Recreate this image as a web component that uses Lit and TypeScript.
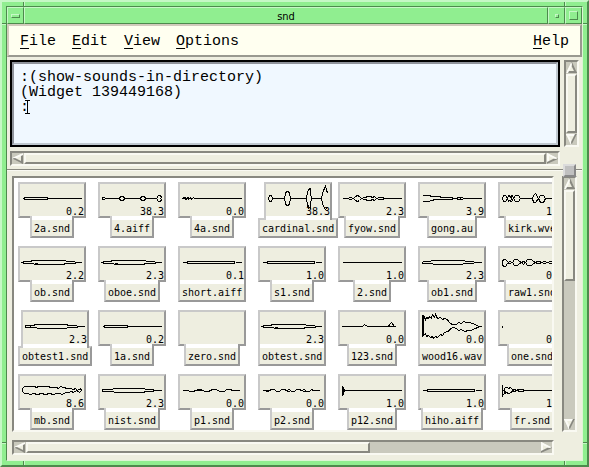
import { LitElement, html, svg, css } from "lit";
import { customElement, property } from "lit/decorators.js";
import { classMap } from "lit/directives/class-map.js";
import { styleMap } from "lit/directives/style-map.js";

interface Sound {
  name: string;
  length: string;
  wave: string;
}

/* Waveforms are drawn around y = 0, from x = 0 to x = 59. */
const OBOE =
  "M8-1H2L0 0L2 1H11L12 2H41L43 1H53M8-1L10-2H43L44-1H52L53 0M52 0H59M12 1H15";
const SHORT_BURST = "M0 0H2M2-1H25V1H2ZM25 0H59";
const TONE = "M0 0H5M5-1H52V1H5ZM53 0H59";

const SOUNDS: Sound[] = [
  { name: "2a.snd", length: "0.2", wave: SHORT_BURST },
  {
    name: "4.aiff",
    length: "38.3",
    wave: "M0-1H2L3 0L2 1H0ZM3 0H17L18-2H21L22 0L21 2H18L17 0M22 0H38L39-2H42L43 0L42 2H39L38 0M43 0H54L56-3H58L59-1L58 0L59 1L58 3H56L54 0",
  },
  {
    name: "4a.snd",
    length: "0.0",
    wave: "M0 0L2-1L3 1L5-1L6 1L8-1L9 1L11-1L12 0H59M1 0L3-1L4 1L6-1L8 1",
  },
  {
    name: "cardinal.snd",
    length: "38.3",
    wave: "M0 0L1-3H3L4 0L3 3H1ZM4 0H16L17-5L18-7H20L21-5L22 0L21 5L20 7H18L17 5L16 0M22 0H38L39-6L40-9L42-10V-5L43 0L42 6V10L40 8L39 6L38 0M39 8L41 11M43 0H53L54-5L55-8L57-12L58-9L59-5M53 0L54 5L55 8L57 11L59 9",
  },
  {
    name: "fyow.snd",
    length: "2.3",
    wave: "M0 0H5L8-1L11 0L13-2L15-3L17-2L19 0L17 2L15 3L13 2L11 0L8 1L5 0M19 0L22-1L26-2H28L30-1L32-2L34 0L32 2L30 1L28 2H26L22 1L19 0M34 0L37-1H40L42 0L40 1H37L34 0M42 0H59",
  },
  {
    name: "gong.au",
    length: "3.9",
    wave: "M0-3H7L9-2H16L20-1H28L33 0M0 3H7L8 2H10L12 1H20L26 1L34 0L36-1H40L41 0L40 1H36L34 0M37-1L39 1M41 0H59",
  },
  {
    name: "kirk.wve",
    length: "1.7",
    wave: "M0 0L1-3H3L5 0L3 3H1ZM5 0L6-3L8-2L10-3L11 0L9 3L7 2L6 3ZM8-2L10 2M11 0L13-3H16L18 0L16 3H13ZM18 0H30L31-3L33-5L36 0L38-3H41L43 0L41 4H38L36 0L33 4H31L30 0M43 0H59",
  },
  { name: "ob.snd", length: "2.2", wave: OBOE },
  { name: "oboe.snd", length: "2.3", wave: OBOE },
  { name: "short.aiff", length: "0.1", wave: TONE },
  { name: "s1.snd", length: "1.0", wave: TONE },
  { name: "2.snd", length: "1.0", wave: "M0 0H59" },
  {
    name: "ob1.snd",
    length: "2.3",
    wave: "M0-1H8L9-2H42L43-1H51L52 0H59M0-1V1H10L11 2H40L41 1H51L52 0",
  },
  {
    name: "raw1.snd",
    length: "0.8",
    wave: "M5-1L3-3H1L0-1V2L1 4H3L5 1M5-1L7 1L5 1L7-1L10 0L12-3H15L17-1L19 0L21-1L23 0L25-3H29L31-1L33 0L35-1H37L39 0L42-1L45 0L48-1L51 0H59M7 1L10 0L12 3H15L17 1L19 0L21 2L23 0L25 3H29L31 1L33 0L35 1H37L39 0L42 1L45 0L48 1L51 0",
  },
  {
    name: "obtest1.snd",
    length: "2.3",
    wave: "M0-1V1H5V-1ZM5-1H8L10-2H41L43-1H51L52 0H59M5 1H11L12 2H41L42 1H52",
  },
  { name: "1a.snd", length: "0.2", wave: SHORT_BURST },
  { name: "zero.snd", length: "", wave: "" },
  { name: "obtest.snd", length: "2.3", wave: OBOE },
  {
    name: "123.snd",
    length: "0.0",
    wave: "M0-1V0H20L22-2L25 0H46L47-2L49-4L52 0M25 0H53",
  },
  {
    name: "wood16.wav",
    length: "0.0",
    wave: "M0-12V10M1-11V9M1-11L3-7L4-9L6-8L7-10L9-8L10-12L12-9L13-12L15-8L18-9L20-7L22-8L25-7L26-5L28-3L30-2H34L36-4L39-3L41-5L44-4L47-4L50-3L53-2L56 0L59 0M1 9L3 7L4 10L6 9L8 11L10 10L11 12L13 10L15 11L18 8L20 9L22 6L25 5L27 4L28 2L31 1L34 2L36 4L39 3L42 5L46 4L49 4L52 2L56 1L57 0",
  },
  { name: "one.snd", length: "0.0", wave: "M0-1V1" },
  {
    name: "mb.snd",
    length: "8.6",
    wave: "M0 0V-2L2-4H12L14-3L16-4H26L28-3L34-3L36-2L38-4L41-3L45-2L48-2L51-1L53-2L55 0L58-2L59 0L57 2L54 0L51 2L49 1L46 2L43 2L40 4L37 3H34L31 4L27 3L23 4L19 3L15 4L11 3L8 4L5 3L2 3L0 1Z",
  },
  {
    name: "nist.snd",
    length: "2.3",
    wave: "M10-1H0V1H11L12 2H41L43 1H51M10-1L11-2H42L43-1H50L52 0H59",
  },
  {
    name: "p1.snd",
    length: "0.0",
    wave: "M0 0H5L8 1H11L13 0H18M14-1H18L20 0L23 1H26L28 0L30-1H34L37 1H42L44-1H48L50 0H57",
  },
  {
    name: "p2.snd",
    length: "0.0",
    wave: "M0 0H7L9-1H12L14 1H17L19-1H22L24 0L27-1L29 1H32L34-1H37L39 0L42-1L44 1H47L49-1L51 0H57M3 1H6M24 1H27M40 1H43",
  },
  {
    name: "p12.snd",
    length: "1.0",
    wave: "M0-4V5M0-4L1-2L2 0L1 3L0 5M1-3V3M2 0H59",
  },
  { name: "hiho.aiff", length: "1.0", wave: TONE },
  {
    name: "fr.snd",
    length: "1.4",
    wave: "M0-6V6M1 0L3-3H5L6-2L8-3L10-1L12-1L14 0L16-1H20L22 0L20 1L17 1L15 0L12 1L10 0L9 2L6 3L4 2L2 3L3 1L1 0M22 0H59",
  },
];

@customElement("motif-scrollbar")
class MotifScrollbar extends LitElement {
  @property({ type: Boolean }) horizontal = false;
  @property({ type: Number }) extent = 100;
  @property() label = "";

  static styles = css`
    :host {
      display: block;
      min-width: 0;
    }
    .bar {
      box-sizing: border-box;
      display: flex;
      flex-direction: column;
      width: 15px;
      height: 100%;
      border: 2px solid;
      border-color: #888880 #f9f9f2 #f9f9f2 #888880;
      background: #c9c9bd;
    }
    .bar.horizontal {
      flex-direction: row;
      width: 100%;
      height: 15px;
    }
    .step {
      flex: none;
      width: 11px;
      height: 11px;
      padding: 0;
      border: 0;
      background: none;
    }
    .step svg {
      display: block;
    }
    .track {
      flex: 1;
      min-width: 0;
      min-height: 0;
      margin: 1px 0;
    }
    .horizontal .track {
      margin: 0 1px;
    }
    .thumb {
      box-sizing: border-box;
      width: 100%;
      height: 100%;
      border: 2px solid;
      border-color: #f9f9f2 #888880 #888880 #f9f9f2;
      background: #eeeee0;
    }
  `;

  private arrow(turn: number) {
    const mirrored = turn === 180 || turn === -90;
    const base = turn === 180 || turn === 90 ? "#fbfbf6" : "#888880";
    return html`<svg width="11" height="11" viewBox="0 0 11 11" aria-hidden="true">
      <g transform="rotate(${turn} 5.5 5.5)">
        ${svg`<polygon points="5.5,0 0,11 11,11" fill="#eeeee0"></polygon>
        <polygon points="0,11 1,9 10,9 11,11" fill=${base}></polygon>
        <polygon points="5,0 6,0 11,11 9,11 5,3" fill=${mirrored ? "#fbfbf6" : "#888880"}></polygon>
        <polygon points="5.5,0 0,11 2,11 6,3" fill=${mirrored ? "#888880" : "#fbfbf6"}></polygon>`}
      </g>
    </svg>`;
  }

  render() {
    const h = this.horizontal;
    const size = `${this.extent}%`;
    return html`<div class=${classMap({ bar: true, horizontal: h })}>
      <button class="step" aria-label="${this.label} back">${this.arrow(h ? -90 : 0)}</button>
      <div class="track">
        <div class="thumb" style=${styleMap(h ? { width: size } : { height: size })}></div>
      </div>
      <button class="step" aria-label="${this.label} forward">${this.arrow(h ? 90 : 180)}</button>
    </div>`;
  }
}

@customElement("sound-icon")
class SoundIcon extends LitElement {
  @property({ attribute: false }) sound!: Sound;

  static styles = css`
    :host {
      display: flex;
      flex-direction: column;
      align-items: center;
      font: 10px/12px "DejaVu Sans Mono", monospace;
      color: #000;
    }
    .thumb,
    .name {
      box-sizing: border-box;
      border: 2px solid;
      border-color: #c9c9c9 #999 #999 #c9c9c9;
      background: #eeeee0;
    }
    .thumb {
      display: grid;
      grid-template-rows: 32px;
      width: 68px;
      height: 36px;
    }
    .wave,
    .length {
      grid-area: 1 / 1;
    }
    .wave {
      fill: none;
      stroke: #000;
      shape-rendering: crispEdges;
    }
    .length {
      place-self: end;
      line-height: 8px;
    }
    .name {
      position: relative;
      height: 20px;
      padding: 0 2px;
      line-height: 17px;
    }
    /* White notch that joins the name tab to the picture above it. */
    .name::before {
      content: "";
      position: absolute;
      box-sizing: border-box;
      top: -4px;
      left: -2px;
      right: -2px;
      width: calc(100% + 4px);
      max-width: 68px;
      height: 4px;
      margin: 0 auto;
      border: solid;
      border-width: 0 2px;
      border-color: #999 #999 #999 #c9c9c9;
      background: #fff;
    }
  `;

  render() {
    return html`<div class="thumb">
        <svg class="wave" width="64" height="32" viewBox="-2.5 -14.5 64 32" aria-hidden="true">
          <path d=${this.sound.wave}></path>
        </svg>
        <span class="length">${this.sound.length}</span>
      </div>
      <div class="name">${this.sound.name}</div>`;
  }
}

@customElement("app-root")
class AppRoot extends LitElement {
  static styles = css`
    :host {
      display: block;
      --edge: #f9f9f2;
      --shade: #888880;
      --green-edge: #c6f8c6;
      --green-shade: #4d8a4d;
      --mono: "Liberation Mono", monospace;
      color: #000;
    }
    .window {
      --v: linear-gradient(to right, var(--green-shade) 50%, var(--green-edge) 50%);
      --h: linear-gradient(to bottom, var(--green-shade) 50%, var(--green-edge) 50%);
      box-sizing: border-box;
      display: flex;
      min-height: 100vh;
      padding: 4px;
      border: 2px solid;
      border-color: var(--green-edge) var(--green-shade) var(--green-shade) var(--green-edge);
      background:
        var(--v) left 21px top / 2px 4px,
        var(--v) right 21px top / 2px 4px,
        var(--v) left 21px bottom / 2px 4px,
        var(--v) right 21px bottom / 2px 4px,
        var(--h) left top 21px / 4px 2px,
        var(--h) right top 21px / 4px 2px,
        var(--h) left bottom 21px / 4px 2px,
        var(--h) right bottom 21px / 4px 2px,
        #90ee90;
      background-repeat: no-repeat;
    }
    .client {
      flex: 1;
      min-width: 0;
      display: flex;
      flex-direction: column;
      border: 1px solid;
      border-color: var(--green-shade) #dcf5d4 #dcf5d4 var(--green-shade);
      background: #eeeee0;
    }
    .titlebar {
      display: flex;
      height: 17px;
      background: #90ee90;
    }
    .title,
    .control {
      box-sizing: border-box;
      border: 1px solid;
      border-color: var(--green-edge) var(--green-shade) var(--green-shade) var(--green-edge);
    }
    .title {
      flex: 1;
      margin: 0;
      text-align: center;
      font: 11px/17px "DejaVu Sans Condensed", "DejaVu Sans", sans-serif;
    }
    .control {
      display: grid;
      place-items: center;
      width: 17px;
      padding: 0;
      background: none;
    }
    .glyph {
      box-sizing: border-box;
      border: 1px solid;
      border-color: var(--green-edge) var(--green-shade) var(--green-shade) var(--green-edge);
    }
    .menu-glyph {
      width: 9px;
      height: 4px;
    }
    .min-glyph {
      width: 4px;
      height: 4px;
    }
    .max-glyph {
      width: 9px;
      height: 9px;
    }
    .menubar {
      box-sizing: border-box;
      display: flex;
      align-items: center;
      gap: 16px;
      height: 33px;
      padding: 2px 11px 0;
      border: 2px solid;
      border-color: #d2cabc #999990 #999990 #d2cabc;
      background: #fffff0;
    }
    .menu {
      padding: 0;
      border: 0;
      background: none;
      color: inherit;
      font: 15px/19px var(--mono);
    }
    .menu:last-child {
      margin-left: auto;
    }
    .mnemonic {
      text-decoration: underline 1px;
      text-underline-offset: 3px;
      text-decoration-skip-ink: none;
    }
    .upper {
      display: grid;
      grid-template-columns: minmax(0, 1fr) 15px;
      gap: 4px;
      padding: 3px;
    }
    .listener {
      position: relative;
      border: 2px solid #000;
    }
    .console {
      box-sizing: border-box;
      display: block;
      width: 100%;
      height: 83px;
      padding: 6px;
      border: 2px solid;
      border-color: #8f939b #c0c9d0 #c0c9d0 #8f939b;
      border-radius: 0;
      outline: 0;
      resize: none;
      overflow: hidden;
      background: #f0f8ff;
      color: #000;
      font: 15px/15px var(--mono);
    }
    .caret {
      position: absolute;
      left: 13px;
      top: 38px;
      fill: none;
      stroke: #000;
      shape-rendering: crispEdges;
    }
    .divider {
      position: relative;
      border-top: 1px solid var(--shade);
      border-bottom: 1px solid var(--edge);
    }
    .sash {
      position: absolute;
      right: 6px;
      top: -6px;
      box-sizing: border-box;
      width: 13px;
      height: 13px;
      padding: 0;
      border: 2px solid;
      border-color: #dcdcdc #888 #888 #dcdcdc;
      background: #c0c0c0;
    }
    .lower {
      flex: 1;
      display: grid;
      grid-template: minmax(0, 1fr) 15px / minmax(0, 1fr) 15px;
      gap: 8px;
      padding: 5px;
    }
    .browser {
      display: grid;
      grid-template-columns: repeat(7, 80px);
      align-content: start;
      justify-items: start;
      row-gap: 8px;
      padding: 4px 0 0 4px;
      overflow: hidden;
      border: 2px solid;
      border-color: var(--shade) var(--edge) var(--edge) var(--shade);
      background: #fff;
    }
  `;

  render() {
    const menu = (name: string) =>
      html`<button class="menu"><span class="mnemonic">${name[0]}</span>${name.slice(1)}</button>`;
    return html`<div class="window">
      <div class="client">
        <header class="titlebar">
          <button class="control" aria-label="Window menu"><span class="glyph menu-glyph"></span></button>
          <h1 class="title">snd</h1>
          <button class="control" aria-label="Minimize"><span class="glyph min-glyph"></span></button>
          <button class="control" aria-label="Maximize"><span class="glyph max-glyph"></span></button>
        </header>
        <nav class="menubar">${["File", "Edit", "View", "Options", "Help"].map(menu)}</nav>
        <section class="upper">
          <div class="listener">
            <textarea
              class="console"
              aria-label="Listener"
              spellcheck="false"
              .value=${":(show-sounds-in-directory)\n(Widget 139449168)\n:"}
            ></textarea>
            <svg class="caret" width="5" height="14" viewBox="0 0 5 14" aria-hidden="true">
              <path d="M0 .5H5M2.5 0V14M0 13.5H5"></path>
            </svg>
          </div>
          <motif-scrollbar label="Listener scroll"></motif-scrollbar>
          <motif-scrollbar horizontal label="Listener scroll"></motif-scrollbar>
        </section>
        <div class="divider"><button class="sash" aria-label="Resize panes"></button></div>
        <section class="lower">
          <div class="browser">
            ${SOUNDS.map((sound) => html`<sound-icon .sound=${sound}></sound-icon>`)}
          </div>
          <motif-scrollbar extent="40" label="Sounds scroll"></motif-scrollbar>
          <motif-scrollbar horizontal extent="67" label="Sounds scroll"></motif-scrollbar>
        </section>
      </div>
    </div>`;
  }
}
